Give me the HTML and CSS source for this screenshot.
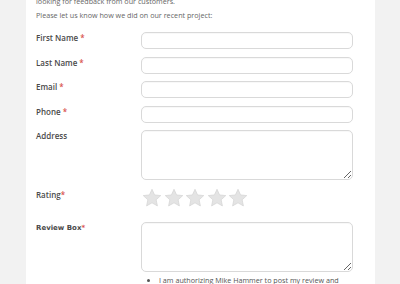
FILE: index.html
```html
<!DOCTYPE html>
<html lang="en">
<head>
    <meta charset="UTF-8">
    <meta name="viewport" content="width=device-width, initial-scale=1.0">
    <title>Review</title>
    <link rel="stylesheet" href="styles.css">
</head>
<body>
    <div class="panel">
        <div class="intro">
            <p>looking for feedback from our customers.</p>
            <p>Please let us know how we did on our recent project:</p>
        </div>

        <form class="review-form">
            <label class="label">First Name <span class="req">*</span></label>
            <input class="field" type="text">

            <label class="label">Last Name <span class="req">*</span></label>
            <input class="field" type="text">

            <label class="label">Email <span class="req">*</span></label>
            <input class="field" type="text">

            <label class="label">Phone <span class="req">*</span></label>
            <input class="field" type="text">

            <label class="label">Address</label>
            <textarea class="field area"></textarea>

            <label class="label rating-label">Rating<span class="req">*</span></label>
            <div class="stars">
                <svg class="star" viewBox="0 0 24 24"><polygon points="12,1.5 15.1,8.3 22.5,9.1 17,14.1 18.5,21.5 12,17.8 5.5,21.5 7,14.1 1.5,9.1 8.9,8.3"/></svg>
                <svg class="star" viewBox="0 0 24 24"><polygon points="12,1.5 15.1,8.3 22.5,9.1 17,14.1 18.5,21.5 12,17.8 5.5,21.5 7,14.1 1.5,9.1 8.9,8.3"/></svg>
                <svg class="star" viewBox="0 0 24 24"><polygon points="12,1.5 15.1,8.3 22.5,9.1 17,14.1 18.5,21.5 12,17.8 5.5,21.5 7,14.1 1.5,9.1 8.9,8.3"/></svg>
                <svg class="star" viewBox="0 0 24 24"><polygon points="12,1.5 15.1,8.3 22.5,9.1 17,14.1 18.5,21.5 12,17.8 5.5,21.5 7,14.1 1.5,9.1 8.9,8.3"/></svg>
                <svg class="star" viewBox="0 0 24 24"><polygon points="12,1.5 15.1,8.3 22.5,9.1 17,14.1 18.5,21.5 12,17.8 5.5,21.5 7,14.1 1.5,9.1 8.9,8.3"/></svg>
            </div>

            <label class="label review-label">Review Box<span class="req">*</span></label>
            <textarea class="field area"></textarea>

            <ul class="consent">
                <li>I am authorizing Mike Hammer to post my review and</li>
            </ul>
        </form>
    </div>
</body>
</html>
```

FILE: styles.css
```css
body {
    margin: 0;
    background: #f2f2f2;
    font-family: 'Open Sans', sans-serif;
    overflow: hidden;
}
.panel {
    margin: 0 25px 0 26px;
    background: #ffffff;
    padding: 0 10px;
    min-height: 284px;
}
.intro {
    margin-top: -6px; /* first line is cut by the top edge */
    color: #666666;
    font-size: 7.2px;
}
.intro p {
    margin: 0;
    line-height: 14px;
}
.review-form {
    display: grid;
    grid-template-columns: 105px 212px;
    row-gap: 7.5px;
    margin-top: 10px;
}
.label {
    font-size: 8px;
    font-weight: 600;
    color: #4a4a4a;
    line-height: 12px;
}
.req {
    color: #d9534f;
}
.field {
    box-sizing: border-box;
    width: 212px;
    height: 17px;
    margin: 0;
    border: 1px solid #d9d9d9;
    border-radius: 5px;
    background: #fff;
    box-shadow: inset 0 1px 1px rgba(0, 0, 0, 0.03);
    font-family: inherit;
}
.area {
    height: 50px;
    resize: vertical;
}
.rating-label {
    padding-top: 1px;
}
.stars {
    display: flex;
    gap: 1.5px;
    height: 27px;
    padding-left: 1px;
}
.star {
    width: 20px;
    height: 20px;
}
.star polygon {
    fill: #e4e4e4;
    stroke: #d2d2d2;
    stroke-width: 0.8;
}
.review-label {
    font-family: 'DejaVu Sans', Verdana, sans-serif;
    font-size: 7px;
    font-weight: bold;
}
.consent {
    grid-column: 2;
    margin: -6px 0 0;
    padding-left: 18px;
    font-size: 7.2px;
    color: #555;
    line-height: 12px;
}
```
